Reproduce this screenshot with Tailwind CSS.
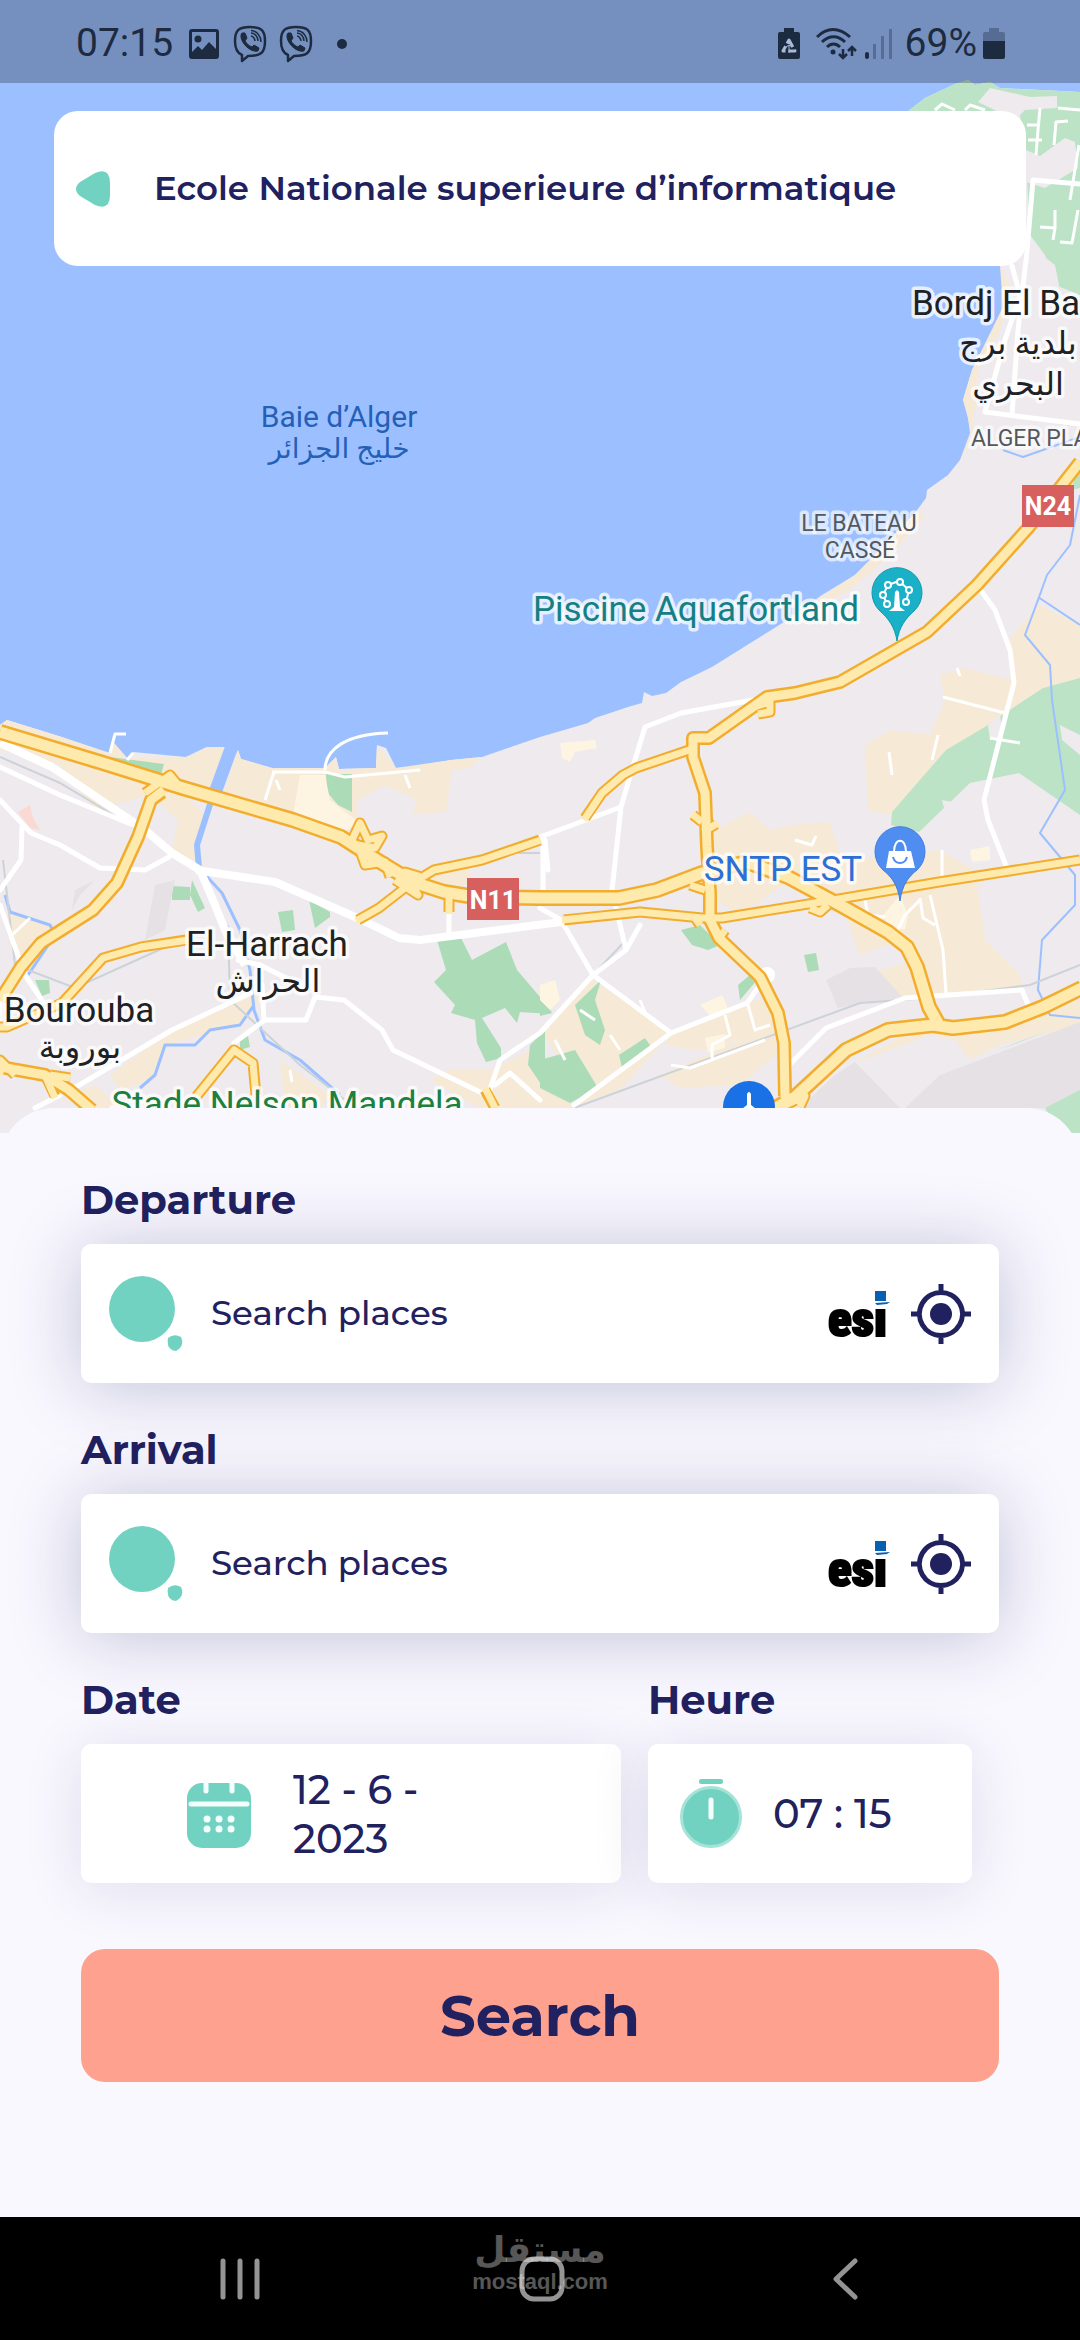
<!DOCTYPE html>
<html lang="en">
<head>
<meta charset="utf-8">
<meta name="viewport" content="width=device-width, initial-scale=1">
<title>Ride search</title>
<script src="https://cdn.jsdelivr.net/npm/@tailwindcss/browser@4"></script>
</head>
<body class="flex min-h-screen flex-col bg-[#f9f8ff] font-[Montserrat,Inter,sans-serif] text-[#21215f]">

<section class="relative aspect-[1080/1133] w-full shrink-0 overflow-hidden">
  <!-- Map -->
  <svg class="absolute inset-0 size-full" viewBox="0 0 1080 1133" preserveAspectRatio="xMidYMid slice" role="img" aria-label="Map of Algiers bay">
    <rect width="1080" height="1133" fill="#9cc0ff"/>
    <!-- land -->
    <path fill="#eeeaee" d="M907 112L925 98L955 84L968 80L975 85L990 82L1000 88L1080 92V1133H0V725L7 720L65 738V743L110 753L114 743L127 758L133 752L186 757L207 747L226 747L213 788L238 750L241 759L272 768L325 768L336 757L339 769L376 768L377 745L386 748L396 768L418 766L451 760L482 757L540 737L571 728L588 723L595 718L628 707L642 703L644 692L652 696L666 693L681 682L712 667L784 622L822 595L855 575L884 550L915 513L926 498L927 490L948 475L960 460L970 433L967 410L963 400L972 370L991 333L1003 307L1006 290L1000 266L940 180Z"/>
    <!-- sand and built-up areas -->
    <g fill="#f6ead7">
      <path d="M0 725L7 720L65 738L110 753L114 743L127 758L186 757L207 747L226 747L215 790L180 792L205 815L195 862L172 850L178 820L150 795L95 810L60 765L0 750Z"/>
      <path d="M238 750L241 759L272 768L325 768L336 757L339 769L376 768L377 745L396 768L451 760L482 757L470 768L452 770L446 812L412 814L417 800L385 785L358 800V825L293 820L222 797Z"/>
      <path d="M1000 266L1012 290L1000 330L978 370L972 440L960 462L972 433L963 400L972 370L1003 307Z"/>
      <path d="M915 513L926 515L895 550L850 590L800 615L784 622L855 575Z"/>
      <path d="M1040 605L1080 625V680L1040 690L1010 715L930 790L890 815L868 810L865 745L890 730L930 735L945 700L940 675L965 668L1010 680L1008 640Z"/>
      <path d="M725 825L750 812L770 830L790 825L830 822L842 860L940 850L975 870L985 940L1020 975L1022 990L905 998L880 990L880 970L920 960L900 940L860 955L840 900L790 880L740 915L700 890V840Z"/>
      <path d="M590 978L671 1033L620 1090L574 1107L560 1060L540 1030Z"/>
      <path d="M671 1033L747 1003L775 995L782 1050L740 1085L680 1088L660 1075L740 1040L700 1050L665 1045Z"/>
      <path d="M5 912L55 925L41 943L21 967L10 945Z"/>
      <path d="M110 1075L172 1030L251 993L262 1000L240 1025L165 1045L150 1080L120 1090Z"/>
      <path d="M492 1070L540 1045L575 1108H480L430 1080L450 1070Z"/>
      <path d="M70 1095L95 1085L125 1110H90ZM280 1060L330 1095L320 1108H285Z"/>
      <path d="M430 870L470 868V884L434 886ZM850 1065L905 1035L1040 1010L1080 1000V1025L1000 1045L970 1060L955 1040L930 1035Z"/>
    </g>
    <!-- parks -->
    <g fill="#bce3c6">
      <path d="M907 112L925 98L955 84L968 80L975 85L990 82L1000 88L1080 92V295L1055 285L1045 255L1030 235L1026 160L1020 115Z"/>
      <path d="M892 812L946 750L988 725L1005 713L1043 688L1080 678V815L1019 773L970 783L919 832L891 825Z"/>
      <path d="M1045 1108L1080 1083V1133H1060ZM997 1050L1050 1030L1020 1042ZM1074 480L1080 470V488L1072 490Z"/>
    </g>
    <g fill="#abdcb7">
      <path d="M437 940L461 938L472 960L506 942L517 970L540 997L550 1014L520 1012L517 1023L505 1008L482 1018L501 1048V1058L486 1062L477 1043L475 1020L451 1013L455 1005L434 982L446 970Z"/>
      <path d="M326 774H352V812L338 805L327 792ZM110 757L164 764L160 778L125 762ZM172 886L190 887V900L172 900ZM192 880L205 908L198 912L190 895ZM278 912L293 910L295 930L282 932ZM309 900L330 912V917L315 928ZM35 980L49 980L50 993L42 996ZM240 1040L248 1036L250 1047L240 1050ZM530 1045L545 1030V1090L528 1065Z"/>
      <path d="M681 930L700 925L720 945L708 950L692 945ZM804 955L816 953L819 970L808 972ZM738 985L750 975L757 980L740 1000ZM619 1055L645 1038L652 1048L622 1068ZM540 1060L575 1050L598 1088L570 1103L540 1088ZM540 990L552 1013L540 1016ZM575 1005L601 980L595 1000L605 1030L600 1045L585 1035Z"/>
    </g>
    <path fill="#eeeaee" d="M990 88L1030 97L1057 96V108L1025 110L1015 120L978 102ZM1026 150L1040 156L1065 138L1075 142L1078 168L1045 188L1026 182ZM1030 235L1042 255L1055 265L1060 290H1010L1026 260ZM988 725L1000 715L1003 738L990 740ZM942 800L968 805L975 820L950 832ZM1060 725L1080 735V755L1062 740Z"/>
    <g fill="#e5e1e5">
      <path d="M826 980L850 968L875 967L905 1000L870 1002L838 1008ZM835 1075L855 1062L900 1108H800ZM905 1108L940 1075L1080 1022V1090L1045 1108ZM155 885L175 880L165 930L145 940ZM75 890L95 880L80 895L72 910Z"/>
    </g>
    <g fill="#fdf5e1">
      <path d="M300 775H325L330 800L358 822L340 835L293 815ZM883 915L900 895L908 915L905 930L888 925ZM560 743L595 740L597 748L575 752L570 762L562 758ZM970 850L990 846V860L972 862ZM540 985L555 980L560 1000L550 1010L540 1000ZM700 1005L722 995L728 1008L712 1018ZM705 1038L725 1034V1048L708 1052Z"/>
    </g>
    <path fill="#fbd9d3" d="M18 812L30 805L33 818L40 830L30 828Z"/>
    <!-- water courses -->
    <g fill="none" stroke="#9cc0ff" stroke-linejoin="round">
      <path stroke-width="13" d="M232 746L216 790"/>
      <path stroke-width="6" d="M213 795L197 845L199 868"/>
      <path stroke-width="3" d="M199 868L222 893L240 930L250 970L254 1010L265 1040L300 1060L340 1095M254 1005L240 1025L210 1030L195 1045L165 1045L155 1075L140 1088M5 895L10 912L50 925L55 935L28 975"/>
      <path stroke-width="2" d="M1003 450L1023 457L1080 437M1080 495L1070 545L1047 575L1038 600L1025 635L1050 665L1052 700L1065 790L1040 833L1075 875V905L1042 940L1038 990L1050 1015L1080 1018M1038 597L1080 625"/>
    </g>
    <path fill="none" stroke="#ccd3d8" stroke-width="2" d="M0 757L60 783L135 828M3 860L15 965L75 988L170 945M228 925L230 1000L300 1065L345 1100M574 1108L860 1003L930 998L1030 985L1080 965M593 975L626 940M515 853H540"/>
    <!-- minor streets -->
    <g fill="none" stroke="#fff" stroke-width="3" stroke-linejoin="round">
      <path d="M110 753L115 734H126M325 770C325 750 345 734 388 733M272 772H325L345 777L420 770M274 772L265 800M276 780L280 790M405 775L410 788M127 760L133 753M1040 108L1038 130L1036 155M1027 125H1037M1028 140H1042M1054 145L1056 122L1068 121M1040 227L1055 228V210M1055 228L1053 240M1078 210L1072 243L1060 242M1058 108L1080 110M935 110L942 104L955 110M965 110L970 105L985 110M1070 200L1079 145"/>
      <path d="M943 697L1005 713M938 735L932 760M990 738L1020 743M889 752L892 775M795 840L812 845L816 836M865 900L868 915L885 917M920 898L923 918L935 925M893 940L905 915L920 900M930 895L943 950L946 993M942 850V880M671 1065L690 1068L765 1040M748 1005L755 1030L770 1025M725 1015L730 1035L712 1045V1058M555 1040L565 1060M580 1010L595 1020M610 1035L620 1050M640 1000L645 1012M957 668L960 676M10 937L30 918M290 1070L292 1082"/>
    </g>
    <!-- main streets -->
    <g fill="none" stroke="#fff" stroke-width="5" stroke-linejoin="round" stroke-linecap="round">
      <path d="M0 767L60 795L138 827M0 800L31 833L60 845L100 868L145 870L169 857M22 827L21 860L0 890M76 1087L172 1030L251 993M234 1043L265 1020H306L315 997L344 1000L382 1030L393 1050L482 1093M264 1020L262 985M0 1030V990M25 975L45 1005M35 1108L60 1095"/>
      <path d="M540 908L561 920L593 975L671 1033L574 1105M593 975L540 1033L500 1060L488 1095M495 1085L510 1073L540 1100M671 1033L747 1003L767 975M753 700L681 713L645 727L631 773L621 807L540 837M621 807L612 890L626 950L593 975M626 950L640 925M543 837V890M545 840L548 870M449 900V935M0 905L25 975"/>
      <path d="M977 585L995 610L1010 650L1014 683L984 800L988 820L1007 868M780 1085L791 1063L826 1028L905 998L1022 990L1029 1007M1012 266L1020 295L1005 340L985 412L1080 424M1026 260L1018 330L1012 415M1026 262L1033 180L1080 184M238 960L260 965L300 985"/>
    </g>
    <g fill="none" stroke="#fff" stroke-width="8" stroke-linejoin="round">
      <path d="M0 743L52 767L145 830L172 853L200 870L215 905L225 930L245 965M196 870L275 882L362 920L399 938L420 940L561 922"/>
      <circle cx="767" cy="975" r="4"/>
    </g>
    <!-- highways: casing, then fill -->
    <g fill="none" stroke="#f3ad2d" stroke-linejoin="round" stroke-linecap="butt">
      <g stroke-width="11">
        <path d="M1080 860L939 882L833 900L722 918L702 918L640 912L564 920M186 940L141 947L103 958L62 1003L7 1027H0M196 1097L234 1050L253 1063L256 1095M358 920L379 908L406 887L434 870L482 860L540 840M585 818L602 793L623 775L636 768L695 748M449 897V912M352 840L360 823L368 840L382 836L375 848L358 845L365 865L385 862L390 877M395 880L418 895L405 872L425 878M145 793L170 775L182 790M750 708L770 702V712L758 714M693 815L702 822M703 832L716 824M700 925L695 918M725 930L718 940M690 885L705 890M810 908L820 912L828 905M783 1106L805 1096L800 1107M45 1075L55 1096M50 1075L70 1078M485 1090L495 1108M178 788L160 780M0 1075V1060L15 1075"/>
      </g>
      <g stroke-width="14">
        <path d="M1080 462L1029 527L977 585L927 632L840 682L795 693L767 697L709 738L693 738L693 757L705 793L707 847L710 893V920L719 938L760 977L778 1013L784 1043L785 1096M162 792L151 800L138 837L117 883L93 910L41 943L21 967L0 1000M0 1067L45 1075L69 1090L92 1110"/>
      </g>
      <g stroke-width="16">
        <path d="M0 732L103 763L183 788L293 820L341 837L372 857L413 882L444 892L475 897L540 898L619 898L657 890L702 873L747 862L788 877L840 905L888 932L907 947L917 967L929 1007L939 1025M772 1110L795 1097L846 1050L888 1030L933 1025L953 1028L1005 1022L1043 1007L1082 988"/>
      </g>
    </g>
    <g fill="none" stroke="#ffeaae" stroke-linejoin="round" stroke-linecap="butt">
      <g stroke-width="7">
        <path d="M1080 860L939 882L833 900L722 918L702 918L640 912L562 920M188 940L141 947L103 958L62 1003L7 1027H0M196 1097L234 1050L253 1063L256 1097M356 921L379 908L406 887L434 870L482 860L541 840M584 820L602 793L623 775L636 768L695 748M449 895V914M352 840L360 823L368 840L382 836L375 848L358 845L365 865L385 862L390 877M395 880L418 895L405 872L425 878M145 793L170 775L182 790M750 708L770 702V712L758 714M692 814L702 822M703 832L718 823M700 925L695 918M725 930L718 940M690 885L705 890M810 908L820 912L828 905M783 1106L805 1096L800 1107M45 1075L55 1098M50 1075L70 1078M485 1088L495 1108M178 788L160 780M0 1075V1060L15 1075"/>
      </g>
      <g stroke-width="9">
        <path d="M1080 462L1029 527L977 585L927 632L840 682L795 693L767 697L709 738L693 738L693 757L705 793L707 847L710 893V920L719 938L760 977L778 1013L784 1043L785 1098M164 790L151 800L138 837L117 883L93 910L41 943L21 967L0 1000M0 1067L45 1075L69 1090L92 1110"/>
      </g>
      <g stroke-width="11">
        <path d="M0 732L103 763L183 788L293 820L341 837L372 857L413 882L444 892L475 897L540 898L619 898L657 890L702 873L747 862L788 877L840 905L888 932L907 947L917 967L929 1007L939 1025M772 1110L795 1097L846 1050L888 1030L933 1025L953 1028L1005 1022L1043 1007L1082 988"/>
      </g>
    </g>
    <!-- road shields -->
    <g font-family="Roboto, sans-serif" font-size="25" font-weight="700" text-anchor="middle" fill="#fff">
      <rect x="1022" y="485" width="52" height="42" fill="#d7605f"/>
      <text x="1048" y="515">N24</text>
      <rect x="467" y="878" width="52" height="42" fill="#d7605f"/>
      <text x="493" y="909">N11</text>
    </g>
    <!-- place labels -->
    <g font-family="Roboto, 'Noto Sans', 'DejaVu Sans', sans-serif" text-anchor="middle" paint-order="stroke" stroke-linejoin="round" stroke-width="7">
      <g stroke="none" fill="#2560b8">
        <text x="339" y="427" font-size="30">Baie d’Alger</text>
        <text x="339" y="458" font-size="28">خليج الجزائر</text>
      </g>
      <g stroke="#fff" stroke-opacity=".75" fill="#202124" font-size="35">
        <text x="912" y="315" text-anchor="start">Bordj El Ba</text>
        <text x="1018" y="354" font-size="32">بلدية برج</text>
        <text x="1018" y="395" font-size="32">البحري</text>
        <text x="267" y="956">El-Harrach</text>
        <text x="268" y="992" font-size="32">الحراش</text>
        <text x="79" y="1022">Bourouba</text>
        <text x="80" y="1058" font-size="32">بوروبة</text>
      </g>
      <g stroke="#fff" stroke-opacity=".65" fill="#54585e" font-size="23">
        <text x="971" y="446" text-anchor="start">ALGER PLA</text>
        <text x="859" y="531">LE BATEAU</text>
        <text x="860" y="558">CASSÉ</text>
      </g>
      <g stroke="#fff" stroke-opacity=".75" font-size="35">
        <text x="696" y="621" fill="#158084">Piscine Aquafortland</text>
        <text x="783" y="881" fill="#2c70d6">SNTP EST</text>
        <text x="287" y="1116" fill="#1c803e">Stade Nelson Mandela</text>
      </g>
    </g>
    <!-- pins -->
    <path fill="#1ab1c8" stroke="#109bae" stroke-width="1" d="M897 641C895 627 888 618 880 611A25 25 0 1 1 914 611C906 618 899 627 897 641Z"/>
    <g fill="none" stroke="#fff" stroke-width="2">
      <path d="M887 604L883 595L888 585L899 581L909 590L906 602"/>
      <g fill="#1ab1c8"><circle cx="887" cy="604" r="3"/><circle cx="883" cy="595" r="3"/><circle cx="888" cy="585" r="3"/><circle cx="900" cy="582" r="3"/><circle cx="909" cy="590" r="3"/><circle cx="906" cy="602" r="3"/></g>
      <path fill="#fff" stroke="none" d="M895 592L897 590L899 592L900 607L905 611H889L894 607Z"/>
    </g>
    <path fill="#4f8df0" stroke="#3f7de0" stroke-width="1" d="M900 901C898 885 891 876 883 870A25 25 0 1 1 917 870C909 876 902 885 900 901Z"/>
    <path fill="#fff" d="M889 851H911L915 868H886Z"/>
    <path fill="none" stroke="#fff" stroke-width="2" d="M894 852C894 837 906 837 906 852"/>
    <path fill="none" stroke="#4f8df0" stroke-width="2" d="M893 857C895 865 905 865 907 857"/>
    <circle cx="749" cy="1107" r="26" fill="#1a70e5"/>
    <path fill="#fff" d="M747 1094Q749 1090 751 1094V1105L760 1112H738L747 1105Z"/>
  </svg>

  <!-- Status bar -->
  <div class="relative flex h-[83px] items-center justify-between bg-black/25 pr-[75px] pl-[76px] font-[Roboto,sans-serif] text-[39px] text-[#1d2b40]">
    <div class="flex items-center gap-4 pt-1">
      <span>07:15</span>
      <svg class="size-[30px]" viewBox="0 0 30 30" aria-hidden="true"><path fill="currentColor" fill-rule="evenodd" d="M3 0H27Q30 0 30 3V27Q30 30 27 30H3Q0 30 0 27V3Q0 0 3 0ZM3 3V23L9 17L13 21L20 13L27 20V3Z"/><circle cx="9" cy="10" r="3.500" fill="currentColor"/></svg>
      <svg class="-ml-0.5 h-[38px] w-[34px]" viewBox="0 0 34 38" fill="none" stroke="currentColor" aria-hidden="true"><path stroke-width="2.500" stroke-linejoin="round" d="M17 2C6 2 2 5 2 16C2 24 4 28 9 30V36L15 31C28 31 32 28 32 16C32 5 28 2 17 2Z"/><path fill="currentColor" stroke-width="1" d="M9 8L12 8L14 13L12 16C14 19 16 21 19 22L21 20L26 23L25 26C17 28 7 17 8 10Z"/><path stroke-width="1.500" d="M18 11C20 11 22 14 22 16M18 8C22 8 25 12 25 16M18 5.500C24 6 28 11 28 17"/></svg>
      <svg class="-ml-1 h-[38px] w-[34px]" viewBox="0 0 34 38" fill="none" stroke="currentColor" aria-hidden="true"><path stroke-width="2.500" stroke-linejoin="round" d="M17 2C6 2 2 5 2 16C2 24 4 28 9 30V36L15 31C28 31 32 28 32 16C32 5 28 2 17 2Z"/><path fill="currentColor" stroke-width="1" d="M9 8L12 8L14 13L12 16C14 19 16 21 19 22L21 20L26 23L25 26C17 28 7 17 8 10Z"/><path stroke-width="1.500" d="M18 11C20 11 22 14 22 16M18 8C22 8 25 12 25 16M18 5.500C24 6 28 11 28 17"/></svg>
      <span class="ml-2 size-[10px] rounded-full bg-current"></span>
    </div>
    <div class="flex items-center pt-1">
      <svg class="mr-4 h-[31px] w-[22px]" viewBox="0 0 22 31" aria-hidden="true"><path fill="currentColor" d="M6 0H16V4H20Q22 4 22 6V29Q22 31 20 31H2Q0 31 0 29V6Q0 4 2 4H6Z"/><path fill="none" stroke="#a9bbd8" stroke-width="3" stroke-linejoin="round" stroke-dasharray="8 3" d="M11 12L17 23H5Z"/><path fill="none" stroke="#a9bbd8" stroke-width="1" d="M11 17V25M8 19L11 17L14 19"/></svg>
      <svg class="mr-2 h-[32px] w-[41px]" viewBox="0 0 41 32" fill="none" stroke="currentColor" stroke-width="3" aria-hidden="true"><path d="M1 9C11 -1 23 -1 34 9M6 14C13 7 22 7 29 14M11 19C15 15 20 15 24 19"/><circle cx="17" cy="24" r="2.500" fill="currentColor" stroke="none"/><path stroke-width="2.500" d="M27 21V30M23 26L27 30L31 26M36 28V19M32 23L36 19L40 23"/></svg>
      <svg class="mr-3 h-[30px] w-[28px]" viewBox="0 0 28 30" fill="currentColor" aria-hidden="true"><rect x="0" y="23" width="4" height="7" rx="2"/><g opacity=".35"><rect x="8" y="15" width="3" height="15"/><rect x="16" y="7" width="3" height="23"/><rect x="24" y="0" width="3" height="30"/></g></svg>
      <span>69%</span>
      <svg class="ml-1.5 h-[31px] w-[22px]" viewBox="0 0 22 31" fill="currentColor" aria-hidden="true"><path opacity=".35" d="M6 0H16V4H20Q22 4 22 6V13H0V6Q0 4 2 4H6Z"/><path d="M0 13H22V29Q22 31 20 31H2Q0 31 0 29Z"/></svg>
    </div>
  </div>

  <!-- Selected place -->
  <header class="relative mx-[5%] mt-7 flex h-[155px] items-center rounded-3xl bg-white pl-[22px]">
    <button type="button" aria-label="Back" class="text-[#72d2c1]">
      <svg class="h-[36px] w-[34px]" viewBox="0 0 34 36" fill="currentColor"><path d="M4 11L19 2Q34 -4 34 12V24Q34 40 19 34L4 25Q-4 18 4 11Z"/></svg>
    </button>
    <h1 class="ml-11 text-[34px] font-semibold whitespace-nowrap">Ecole Nationale superieure d’informatique</h1>
  </header>
</section>

<main class="relative -mt-[25px] flex-1 rounded-t-[54px] bg-[#f9f8ff] px-[7.5%] pt-16 pb-[134px]">
  <form class="flex flex-col">
    <label for="departure" class="text-[40px] leading-[56px] font-bold">Departure</label>
    <div class="mt-4 flex h-[139px] items-center rounded-[10px] bg-white pr-7 pl-7 shadow-[0_4px_70px_rgba(33,33,95,0.25)]">
      <svg class="h-[76px] w-[74px] shrink-0" viewBox="0 0 74 76" fill="#72d2c1" aria-hidden="true"><circle cx="33" cy="33" r="33"/><path d="M59 62Q65 57 72 61Q76 70 67 75Q57 74 59 62Z"/></svg>
      <input id="departure" type="text" placeholder="Search places" class="ml-7 min-w-0 flex-1 bg-transparent text-[34px] font-medium outline-none placeholder:text-[#21215f] placeholder:opacity-100">
      <svg class="h-[50px] w-[62px] shrink-0 overflow-visible" viewBox="0 0 62 50" role="img" aria-label="ESI"><text x="0" y="47" font-family="'Roboto Condensed', 'Liberation Sans', sans-serif" font-weight="900" font-size="49" fill="#000" stroke="#000" stroke-width="2">esı</text><path fill="#0860b0" d="M47 2H58V12H47ZM47 14L62 13L59 15L49 16Z"/></svg>
      <button type="button" aria-label="Use my location for departure" class="ml-[21px]">
        <svg class="size-[60px]" viewBox="0 0 60 60"><circle cx="30" cy="30" r="11" fill="#21215f"/><path fill="none" stroke="#21215f" stroke-width="5" d="M30 8.500A21.500 21.500 0 1 1 29.900 8.500ZM30 0V8M30 52V60M0 30H8M52 30H60"/></svg>
      </button>
    </div>

    <label for="arrival" class="mt-[39px] text-[40px] leading-[56px] font-bold">Arrival</label>
    <div class="mt-4 flex h-[139px] items-center rounded-[10px] bg-white pr-7 pl-7 shadow-[0_4px_70px_rgba(33,33,95,0.25)]">
      <svg class="h-[76px] w-[74px] shrink-0" viewBox="0 0 74 76" fill="#72d2c1" aria-hidden="true"><circle cx="33" cy="33" r="33"/><path d="M59 62Q65 57 72 61Q76 70 67 75Q57 74 59 62Z"/></svg>
      <input id="arrival" type="text" placeholder="Search places" class="ml-7 min-w-0 flex-1 bg-transparent text-[34px] font-medium outline-none placeholder:text-[#21215f] placeholder:opacity-100">
      <svg class="h-[50px] w-[62px] shrink-0 overflow-visible" viewBox="0 0 62 50" role="img" aria-label="ESI"><text x="0" y="47" font-family="'Roboto Condensed', 'Liberation Sans', sans-serif" font-weight="900" font-size="49" fill="#000" stroke="#000" stroke-width="2">esı</text><path fill="#0860b0" d="M47 2H58V12H47ZM47 14L62 13L59 15L49 16Z"/></svg>
      <button type="button" aria-label="Use my location for arrival" class="ml-[21px]">
        <svg class="size-[60px]" viewBox="0 0 60 60"><circle cx="30" cy="30" r="11" fill="#21215f"/><path fill="none" stroke="#21215f" stroke-width="5" d="M30 8.500A21.500 21.500 0 1 1 29.900 8.500ZM30 0V8M30 52V60M0 30H8M52 30H60"/></svg>
      </button>
    </div>

    <div class="mt-[39px] mr-[27px] grid grid-cols-[5fr_3fr] gap-[27px]">
      <div class="flex flex-col">
        <label for="date" class="text-[40px] leading-[56px] font-bold">Date</label>
        <button id="date" type="button" class="mt-4 flex h-[139px] items-center justify-center gap-[42px] rounded-[10px] bg-white text-left shadow-[0_6px_60px_rgba(33,33,95,0.12)]">
          <svg class="h-[69px] w-[64px]" viewBox="0 0 64 69" aria-hidden="true"><rect y="4" width="64" height="65" rx="15" fill="#72d2c1"/><g stroke="#f4fffd" stroke-linecap="round" stroke-width="5" fill="none"><path d="M19 0V12M45 0V12M4 25H60"/></g><g fill="#f4fffd"><circle cx="20" cy="40" r="3.500"/><circle cx="32" cy="40" r="3.500"/><circle cx="44" cy="40" r="3.500"/><circle cx="20" cy="50" r="3.500"/><circle cx="32" cy="50" r="3.500"/><circle cx="44" cy="50" r="3.500"/></g></svg>
          <span class="w-[222px] text-[40px] leading-[49px] font-medium">12 - 6 -<br>2023</span>
        </button>
      </div>
      <div class="flex flex-col">
        <label for="heure" class="text-[40px] leading-[56px] font-bold">Heure</label>
        <button id="heure" type="button" class="mt-4 flex h-[139px] items-center gap-[31px] rounded-[10px] bg-white pl-8 shadow-[0_6px_60px_rgba(33,33,95,0.12)]">
          <svg class="h-[69px] w-[62px]" viewBox="0 0 62 69" aria-hidden="true"><rect x="19" width="24" height="5" rx="2" fill="#72d2c1"/><circle cx="31" cy="38" r="29.500" fill="#72d2c1" stroke="#a5e2d7" stroke-width="3"/><path stroke="#f4fffd" stroke-width="5" stroke-linecap="round" d="M31 21V38"/></svg>
          <span class="text-[40px] leading-[49px] font-medium">07 : 15</span>
        </button>
      </div>
    </div>

    <button type="submit" class="mt-[66px] h-[133px] rounded-3xl bg-[#ffa18f] text-[56px] font-bold">Search</button>
  </form>
</main>

<!-- System navigation -->
<nav class="relative grid h-[123px] grid-cols-3 place-items-center bg-black pr-[84px] pl-[89px] text-[#949494]">
  <button type="button" aria-label="Recent apps"><svg class="h-[42px] w-[40px]" viewBox="0 0 40 42" stroke="currentColor" stroke-width="5" stroke-linecap="round"><path d="M3 3V39M20 3V39M37 3V39"/></svg></button>
  <button type="button" aria-label="Home"><svg class="size-[46px]" viewBox="0 0 46 46" fill="none" stroke="currentColor" stroke-width="5"><rect x="3" y="3" width="40" height="40" rx="12"/></svg></button>
  <button type="button" aria-label="Back"><svg class="h-[42px] w-[26px]" viewBox="0 0 26 42" fill="none" stroke="currentColor" stroke-width="5" stroke-linecap="round" stroke-linejoin="round"><path d="M23 3L4 21L23 39"/></svg></button>
  <div class="pointer-events-none absolute inset-x-0 top-0 flex flex-col items-center text-white/35">
    <span class="font-['DejaVu_Sans',sans-serif] text-[36px] leading-[66px] font-bold" lang="ar">مستقل</span>
    <span class="-mt-3 font-['Liberation_Sans',sans-serif] text-[22px] leading-[22px] font-bold">mostaql.com</span>
  </div>
</nav>
</body>
</html>
